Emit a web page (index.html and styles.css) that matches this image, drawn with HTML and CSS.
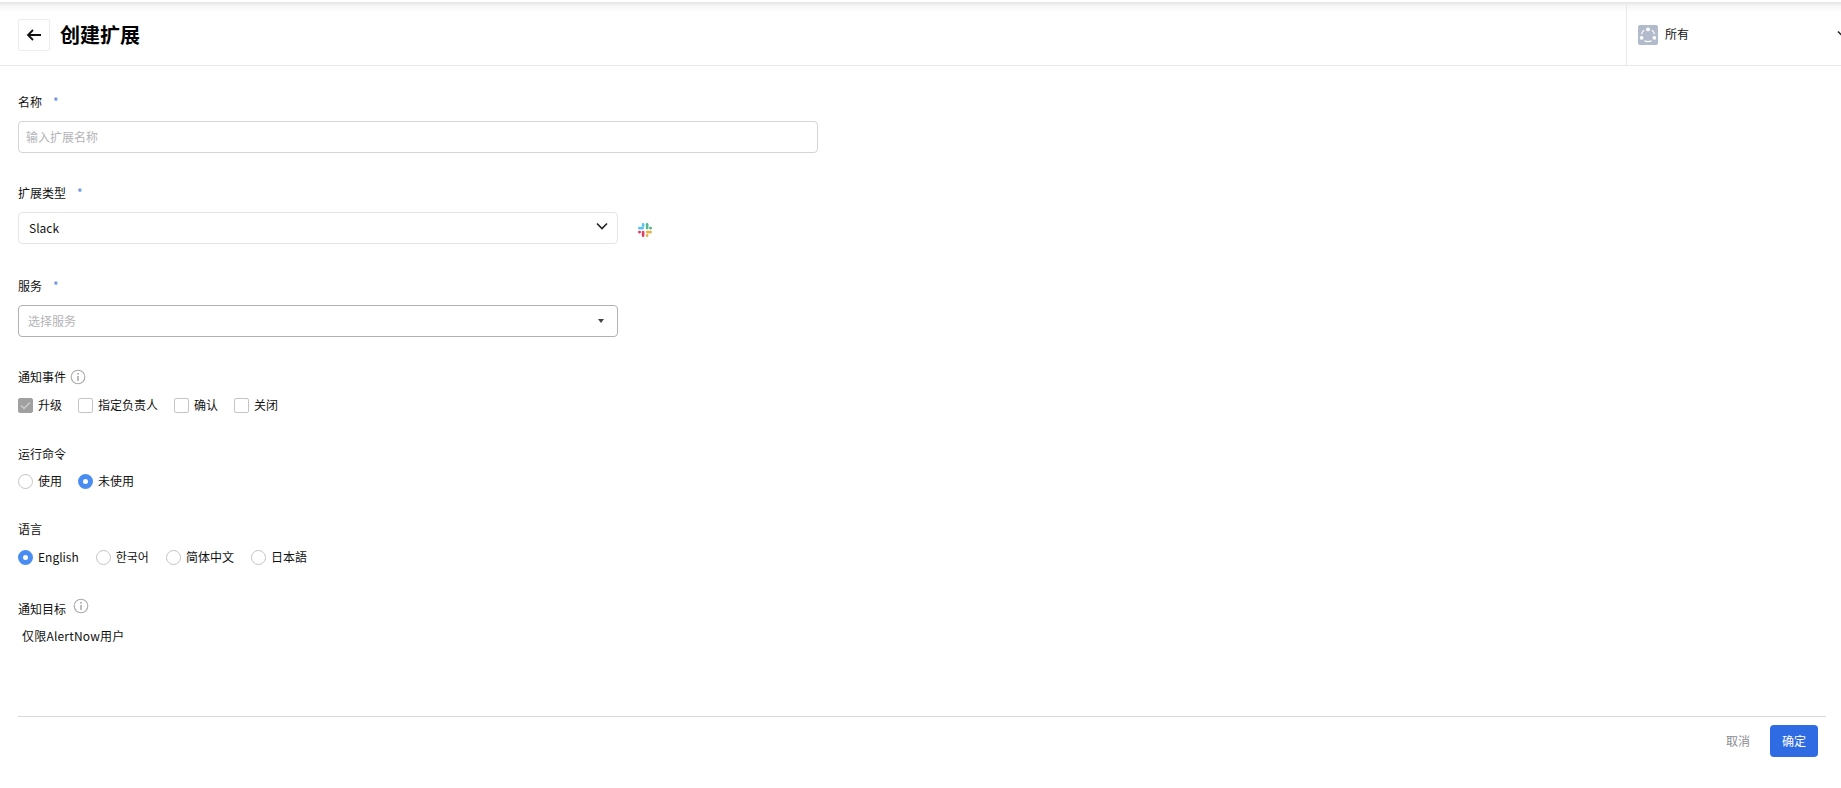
FILE: index.html
```html
<!DOCTYPE html>
<html lang="zh-CN">
<head>
<meta charset="utf-8">
<title>创建扩展</title>
<link rel="stylesheet" href="styles.css">
</head>
<body>
<div class="page">
  <header class="topbar">
    <div class="topbar-left">
      <button class="back" type="button" aria-label="返回">
        <svg width="16" height="16" viewBox="0 0 16 16"><path d="M15 8H2M7 3 2 8l5 5" fill="none" stroke="#111" stroke-width="1.8"/></svg>
      </button>
      <h1 class="title">创建扩展</h1>
    </div>
    <div class="scope">
      <span class="scope-icon">
        <svg width="20" height="20" viewBox="0 0 20 20"><rect width="20" height="20" rx="2" fill="#b1bbcb"/><circle cx="10" cy="4.4" r="1.9" fill="#fff"/><circle cx="3.600" cy="12.800" r="1.900" fill="#fff"/><circle cx="16.400" cy="12.800" r="1.900" fill="#fff"/><path d="M6.400 15.800c2.200 1.100 5 1.100 7.200 0M3.500 9.300c.2-1.700 1.100-3.100 2.700-4.100M16.500 9.300c-.2-1.700-1.100-3.100-2.700-4.100" fill="none" stroke="#fff" stroke-width="1.200"/></svg>
      </span>
      <span class="scope-label">所有</span>
      <svg class="scope-chevron" width="12" height="8" viewBox="0 0 12 8"><path d="M1 1.500 6 6.500l5-5" fill="none" stroke="#222" stroke-width="1.500"/></svg>
    </div>
  </header>

  <form class="form">
    <div class="field">
      <div class="label req-label">名称<span class="req">*</span></div>
      <div class="input placeholder">输入扩展名称</div>
    </div>
    <div class="field gap-29">
      <div class="label req-label">扩展类型<span class="req">*</span></div>
      <div class="select-row">
        <div class="select">
          <span>Slack</span>
          <svg width="12" height="8" viewBox="0 0 12 8"><path d="M1 1.500 6 6.500l5-5" fill="none" stroke="#222" stroke-width="1.600"/></svg>
        </div>
        <svg class="slack" width="16" height="16" viewBox="0 0 16 16">
          <rect x="1" y="4.800" width="6" height="2.600" rx="1.300" fill="#5cc4ea"/>
          <rect x="4.800" y="1" width="2.600" height="4" rx="1.300" fill="#5cc4ea"/>
          <rect x="8.800" y="1" width="2.600" height="6.400" rx="1.300" fill="#4fb88c"/>
          <rect x="12" y="4.800" width="3" height="2.600" rx="1.300" fill="#4fb88c"/>
          <rect x="8.800" y="8.800" width="6.200" height="2.600" rx="1.300" fill="#e8b34a"/>
          <rect x="8.800" y="12" width="2.600" height="3" rx="1.300" fill="#e8b34a"/>
          <rect x="4.800" y="8.800" width="2.600" height="6.200" rx="1.300" fill="#de3f69"/>
          <rect x="1" y="8.800" width="3" height="2.600" rx="1.300" fill="#de3f69"/>
        </svg>
      </div>
    </div>
    <div class="field gap-31">
      <div class="label req-label">服务<span class="req">*</span></div>
      <div class="combo">
        <span class="placeholder">选择服务</span>
        <span class="caret"></span>
      </div>
    </div>
    <div class="field gap-30">
      <div class="label">通知事件
        <svg class="info" width="16" height="16" viewBox="0 0 16 16"><circle cx="8" cy="8" r="6.800" fill="none" stroke="#aaa" stroke-width="1.100"/><path d="M8 7v5" stroke="#999" stroke-width="1.300"/><circle cx="8" cy="4.800" r=".9" fill="#999"/></svg>
      </div>
      <div class="options">
        <label class="opt"><span class="check on"><svg width="11" height="9" viewBox="0 0 11 9"><path d="M1 4.500 4 7.500 10 1.500" fill="none" stroke="#ccc" stroke-width="1.500"/></svg></span>升级</label>
        <label class="opt"><span class="check"></span>指定负责人</label>
        <label class="opt"><span class="check"></span>确认</label>
        <label class="opt"><span class="check"></span>关闭</label>
      </div>
    </div>
    <div class="field gap-29">
      <div class="label">运行命令</div>
      <div class="options options-close">
        <label class="opt"><span class="radio"></span>使用</label>
        <label class="opt"><span class="radio on"></span>未使用</label>
      </div>
    </div>
    <div class="field gap-28">
      <div class="label">语言</div>
      <div class="options lang">
        <label class="opt"><span class="radio on"></span>English</label>
        <label class="opt"><span class="radio"></span>한국어</label>
        <label class="opt"><span class="radio"></span>简体中文</label>
        <label class="opt"><span class="radio"></span>日本語</label>
      </div>
    </div>
    <div class="field gap-32">
      <div class="label">通知目标
        <svg class="info raised" width="16" height="16" viewBox="0 0 16 16"><circle cx="8" cy="8" r="6.800" fill="none" stroke="#aaa" stroke-width="1.100"/><path d="M8 7v5" stroke="#999" stroke-width="1.300"/><circle cx="8" cy="4.800" r=".9" fill="#999"/></svg>
      </div>
      <div class="note">仅限AlertNow用户</div>
    </div>
  </form>

  <footer class="footer">
    <button class="btn-cancel" type="button">取消</button>
    <button class="btn-ok" type="button">确定</button>
  </footer>
</div>
</body>
</html>
```

FILE: styles.css
```css
* { box-sizing: border-box; }
html, body { margin: 0; height: 100%; overflow: hidden; background: #fff; }
body {
  font-family: "Noto Sans CJK SC", "Noto Sans CJK KR", "Noto Sans", sans-serif;
  font-size: 12px;
  line-height: 20px;
  color: #111;
}
.page { width: 1841px; height: 788px; overflow: hidden; padding-top: 2px; }

.topbar {
  height: 64px;
  display: flex;
  justify-content: space-between;
  border-bottom: 1px solid #e9e9ec;
  background: linear-gradient(#e4e4e6 0, #f6f6f7 4px, #fff 10px);
}
.topbar-left { display: flex; align-items: center; padding: 0 0 0 18px; gap: 10px; margin-top: 2px; }
.back {
  width: 32px; height: 32px; padding: 0;
  display: flex; align-items: center; justify-content: center;
  background: #fff; border: 1px solid #ececee; border-radius: 2px;
}
.title { margin: 0; font-size: 20px; line-height: 28px; font-weight: 700; color: #000; }
.scope {
  width: 215px;
  flex: none;
  display: flex; align-items: center;
  padding-left: 11px;
  border-left: 1px solid #e9e9ec;
}
.scope-icon { display: flex; flex: none; width: 20px; height: 20px; margin-top: 2px; }
.scope-label { margin-left: 7px; flex: none; white-space: nowrap; }
.scope-chevron { margin-left: 148px; flex: none; }

.form { padding: 25px 0 0 18px; height: 650px; }
.field { display: flex; flex-direction: column; align-items: flex-start; }
.gap-28 { margin-top: 28px; }
.gap-29 { margin-top: 29px; }
.gap-30 { margin-top: 30px; }
.gap-31 { margin-top: 31px; }
.gap-32 { margin-top: 32px; }
.label { height: 20px; display: flex; align-items: center; }
.req-label { padding-top: 2px; }
.req { color: #5b7fe8; margin-left: 11px; }
.info { margin-left: 4px; }
.info.raised { margin-left: 7px; margin-top: -7px; }

.input, .select, .combo {
  margin-top: 10px;
  height: 32px;
  display: flex; align-items: center;
  border-radius: 4px;
  background: #fff;
}
.input { width: 800px; border: 1px solid #d3d5dc; padding-left: 7px; }
.placeholder { color: #b4b4b8; }
.select-row { display: flex; align-items: center; }
.select {
  width: 600px; border: 1px solid #e5e5e8;
  padding: 0 9px 0 10px;
  justify-content: space-between;
}
.select svg { margin-top: -4px; }
.slack { margin: 14px 0 0 19px; }
.combo {
  width: 600px; border: 1px solid #aeb1b6;
  padding: 0 13px 0 9px;
  justify-content: space-between;
}
.caret { width: 0; height: 0; border: 3.500px solid transparent; border-top: 4px solid #444; border-bottom: 0; }

.options { display: flex; margin-top: 8px; height: 20px; }
.options-close { margin-top: 7px; }
.opt { display: flex; align-items: center; gap: 5px; margin-right: 16px; }
.lang .opt { margin-right: 17px; }
.check, .radio {
  width: 15px; height: 15px; flex: none; background: #fff; border: 1px solid #c4c4c6;
  display: flex; align-items: center; justify-content: center;
}
.check { border-radius: 2px; }
.check.on { background: #a0a0a0; border-color: #a0a0a0; }
.radio { border-radius: 50%; }
.radio.on { border: 5px solid #4a8df2; }
.note { margin: 7px 0 0 4px; letter-spacing: .2px; }

.footer {
  margin: 0 15px 0 18px;
  height: 57px;
  border-top: 1px solid #d4d9e2;
  display: flex; justify-content: flex-end; align-items: flex-start;
  padding: 8px 8px 0 0;
}
.btn-cancel, .btn-ok { font: inherit; border: 0; padding: 0; }
.btn-cancel { background: none; color: #8a8d93; height: 32px; margin-right: 20px; }
.btn-ok { width: 48px; height: 32px; border-radius: 4px; background: #2f6be3; color: #fff; }
```
